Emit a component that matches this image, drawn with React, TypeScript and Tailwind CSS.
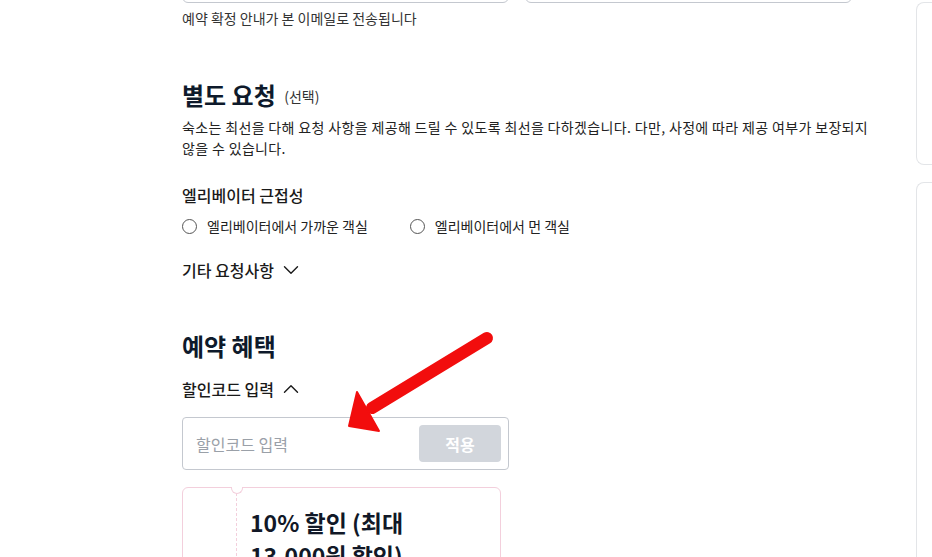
import {ChevronDown, ChevronUp} from "lucide-react";

const FONT = {fontFamily: '"Noto Sans CJK KR", "Noto Sans", sans-serif'};

const Radio = ({label}: {label: string}) => (
    <label className="flex h-[20px] items-center gap-[10px] text-[14px] text-[#222]">
        <span className="h-[15px] w-[15px] rounded-full border-[1.5px] border-[#555]" />
        {label}
    </label>
);

// 할인코드 영역을 가리키는 빨간 화살표 (주석용 오버레이)
const PointerArrow = () => (
    <svg className="pointer-events-none absolute left-[330px] top-[320px]" width="180" height="120" viewBox="0 0 180 120">
        <line x1="157" y1="18" x2="42" y2="88" stroke="#f20d0d" strokeWidth="12" strokeLinecap="round" />
        <polygon points="19,106 27,72 49,111" fill="#f20d0d" strokeLinejoin="round" stroke="#f20d0d" strokeWidth="2" />
    </svg>
);

export default function App() {
    return (
        <div className="relative flex h-[557px] w-[932px] overflow-hidden bg-white" style={FONT}>
            <main className="ml-[182px] flex w-[670px] shrink-0 flex-col">
                <div className="-mt-[45px] flex gap-4">
                    <div className="h-[48px] flex-1 rounded-md border border-[#c4c8cf]" />
                    <div className="h-[48px] flex-1 rounded-md border border-[#c4c8cf]" />
                </div>
                <p className="mt-[5px] text-[14px] leading-[20px] text-[#333]">예약 확정 안내가 본 이메일로 전송됩니다</p>

                <section className="mt-[51px]">
                    <h2 className="h-[32px] text-[24px] font-bold leading-[32px] text-[#0e1a2b]">
                        별도 요청 <span className="ml-[3px] align-[3px] text-[14px] font-normal leading-none text-[#333]">(선택)</span>
                    </h2>
                    <p className="mt-[6px] w-[690px] text-[14px] leading-[21px] tracking-[0.35px] text-[#222]">
                        숙소는 최선을 다해 요청 사항을 제공해 드릴 수 있도록 최선을 다하겠습니다. 다만, 사정에 따라 제공 여부가 보장되지 않을 수 있습니다.
                    </p>

                    <h3 className="mt-[24px] text-[16px] font-medium leading-[24px] text-[#1a1a1a]">엘리베이터 근접성</h3>
                    <div className="mt-[9px] flex gap-[42px]">
                        <Radio label="엘리베이터에서 가까운 객실" />
                        <Radio label="엘리베이터에서 먼 객실" />
                    </div>

                    <button className="mt-[22px] flex h-[24px] items-center gap-[4px] text-[16px] font-medium leading-[24px] text-[#1a1a1a]">
                        기타 요청사항 <ChevronDown size={26} strokeWidth={1.3} />
                    </button>
                </section>

                <section className="mt-[48px]">
                    <h2 className="h-[32px] text-[24px] font-bold leading-[32px] text-[#0e1a2b]">예약 혜택</h2>
                    <button className="mt-[15px] flex h-[24px] items-center gap-[4px] text-[16px] font-medium leading-[24px] text-[#1a1a1a]">
                        할인코드 입력 <ChevronUp size={26} strokeWidth={1.3} />
                    </button>

                    <div className="mt-[16px] flex h-[53px] w-[327px] items-center rounded border border-[#c4c8cf] pl-[13px] pr-[7px]">
                        <input className="min-w-0 flex-1 bg-transparent text-[16px] text-[#222] outline-none placeholder:text-[#9aa0a8]" placeholder="할인코드 입력" />
                        <button className="h-[37px] w-[82px] rounded bg-[#d2d6dc] text-[16px] font-bold text-white">적용</button>
                    </div>

                    <div className="relative mt-[17px] flex h-[120px] w-[319px] rounded-md border border-[#f3cfdc]">
                        <span className="absolute -top-[1px] left-[48px] h-[7px] w-[12px] rounded-b-full border border-t-0 border-[#f3cfdc] bg-white" />
                        <div className="w-[54px] border-r border-dashed border-[#f3cfdc]" />
                        <p className="pl-[13px] pt-[18px] text-[23px] font-bold leading-[33px] text-[#111827]">
                            10% 할인 (최대
                            <br />
                            13,000원 할인)
                        </p>
                    </div>
                </section>
            </main>

            <aside className="ml-[64px] flex flex-1 flex-col gap-[17px]">
                <div className="mt-[2px] h-[173px] rounded-l-lg border border-r-0 border-[#e3e5e8]" />
                <div className="h-[400px] rounded-tl-lg border border-r-0 border-b-0 border-[#e3e5e8]" />
            </aside>

            <PointerArrow />
        </div>
    );
}
